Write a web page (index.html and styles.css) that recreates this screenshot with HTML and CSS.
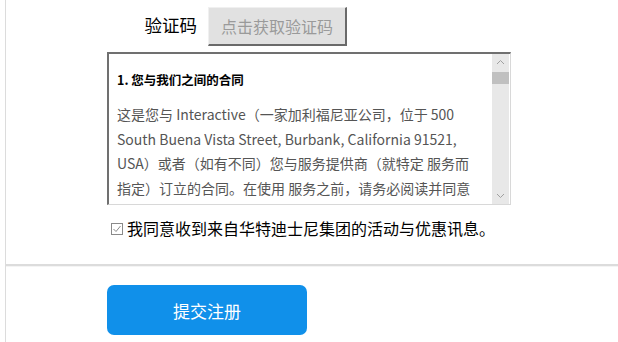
FILE: index.html
```html
<!DOCTYPE html>
<html lang="zh-CN">
<head>
    <meta charset="UTF-8">
    <meta name="viewport" content="width=device-width, initial-scale=1.0">
    <title>注册</title>
    <link rel="stylesheet" href="styles.css">
</head>
<body>
    <div class="page">
        <div class="form">
            <div class="code-row">
                <label class="code-label" for="code">验证码</label>
                <button type="button" class="code-btn" disabled>点击获取验证码</button>
            </div>

            <div class="terms">
                <div class="terms-text">
                    <h4>1. 您与我们之间的合同</h4>
                    <p>这是您与 Interactive（一家加利福尼亚公司，位于 500 South Buena Vista Street, Burbank, California 91521, USA）或者（如有不同）您与服务提供商（就特定 服务而指定）订立的合同。在使用 服务之前，请务必阅读并同意</p>
                </div>
                <div class="scrollbar">
                    <svg class="arrow" width="9" height="6" viewBox="0 0 9 6"><path d="M1 5 L4.5 1.5 L8 5" fill="none" stroke="#a0a0a0" stroke-width="1"/></svg>
                    <div class="thumb"></div>
                    <div class="track"></div>
                    <svg class="arrow" width="9" height="6" viewBox="0 0 9 6"><path d="M1 1 L4.5 4.5 L8 1" fill="none" stroke="#a0a0a0" stroke-width="1"/></svg>
                </div>
            </div>

            <div class="agree">
                <svg class="check" width="12" height="12" viewBox="0 0 12 12">
                    <rect x="0.5" y="0.5" width="11" height="11" fill="#fff" stroke="#8a8a8a"/>
                    <path d="M2.5 6 L5 8.5 L9.5 3" fill="none" stroke="#8a8a8a" stroke-width="1"/>
                </svg>
                <span>我同意收到来自华特迪士尼集团的活动与优惠讯息。</span>
            </div>
        </div>

        <div class="divider"></div>

        <div class="form">
            <button type="submit" class="submit">提交注册</button>
        </div>
    </div>
</body>
</html>
```

FILE: styles.css
```css
body { margin: 0; font-family: "Noto Sans CJK SC", "Noto Sans", sans-serif; background: #fff; }
.page { margin-left: 5px; border-left: 1px solid #dcdcdc; min-height: 342px; box-sizing: border-box; }
.form { padding-left: 101px; }

.code-row { display: flex; align-items: flex-start; padding-top: 7px; }
.code-label { width: 101px; text-align: right; padding-right: 11px; box-sizing: border-box; font-size: 17.5px; line-height: 22px; margin-top: 7px; color: #000; }
.code-btn { width: 139px; height: 39px; padding: 0; background: #e1e1e1; color: #9a9a9a; font-family: inherit; font-size: 16px;
    border-style: solid; border-width: 1px 2px 2px 1px; border-color: #f0f0f0 #6a6a6a #6a6a6a #f0f0f0; }

.terms { display: flex; width: 404px; height: 153px; margin-top: 6px; box-sizing: border-box;
    border-style: solid; border-width: 2px 1px 1px 2px; border-color: #707070 #d8d8d8 #d8d8d8 #707070; }
.terms-text { flex: 1; overflow: hidden; padding: 0 10px 0 8px; }
.terms-text h4 { margin: 17px 0 0; font-size: 12.5px; line-height: 18px; font-weight: bold; color: #000; }
.terms-text p { margin: 13px 0 0; font-size: 14px; line-height: 24.5px; color: #555; }

.scrollbar { width: 17px; background: #e8e8e8; display: flex; flex-direction: column; align-items: center; margin-right: 1px; }
.arrow { margin: 5px 0; flex: none; }
.thumb { width: 17px; height: 12px; background: #c0c0c0; margin-top: 2px; }
.track { flex: 1; }

.agree { display: flex; align-items: center; margin-top: 12px; padding-left: 4px; font-size: 16px; color: #000; line-height: 22px; }
.check { margin-right: 4px; margin-top: 1px; }

.divider { margin-top: 25px; border-top: 2px solid #dcdcdc; border-bottom: 1px solid #f4f4f4; }

.submit { display: block; margin-top: 18px; width: 200px; height: 50px; border: none; border-radius: 7px; background: #1090ea; color: #fff; font-family: inherit; font-size: 17px; }
```
